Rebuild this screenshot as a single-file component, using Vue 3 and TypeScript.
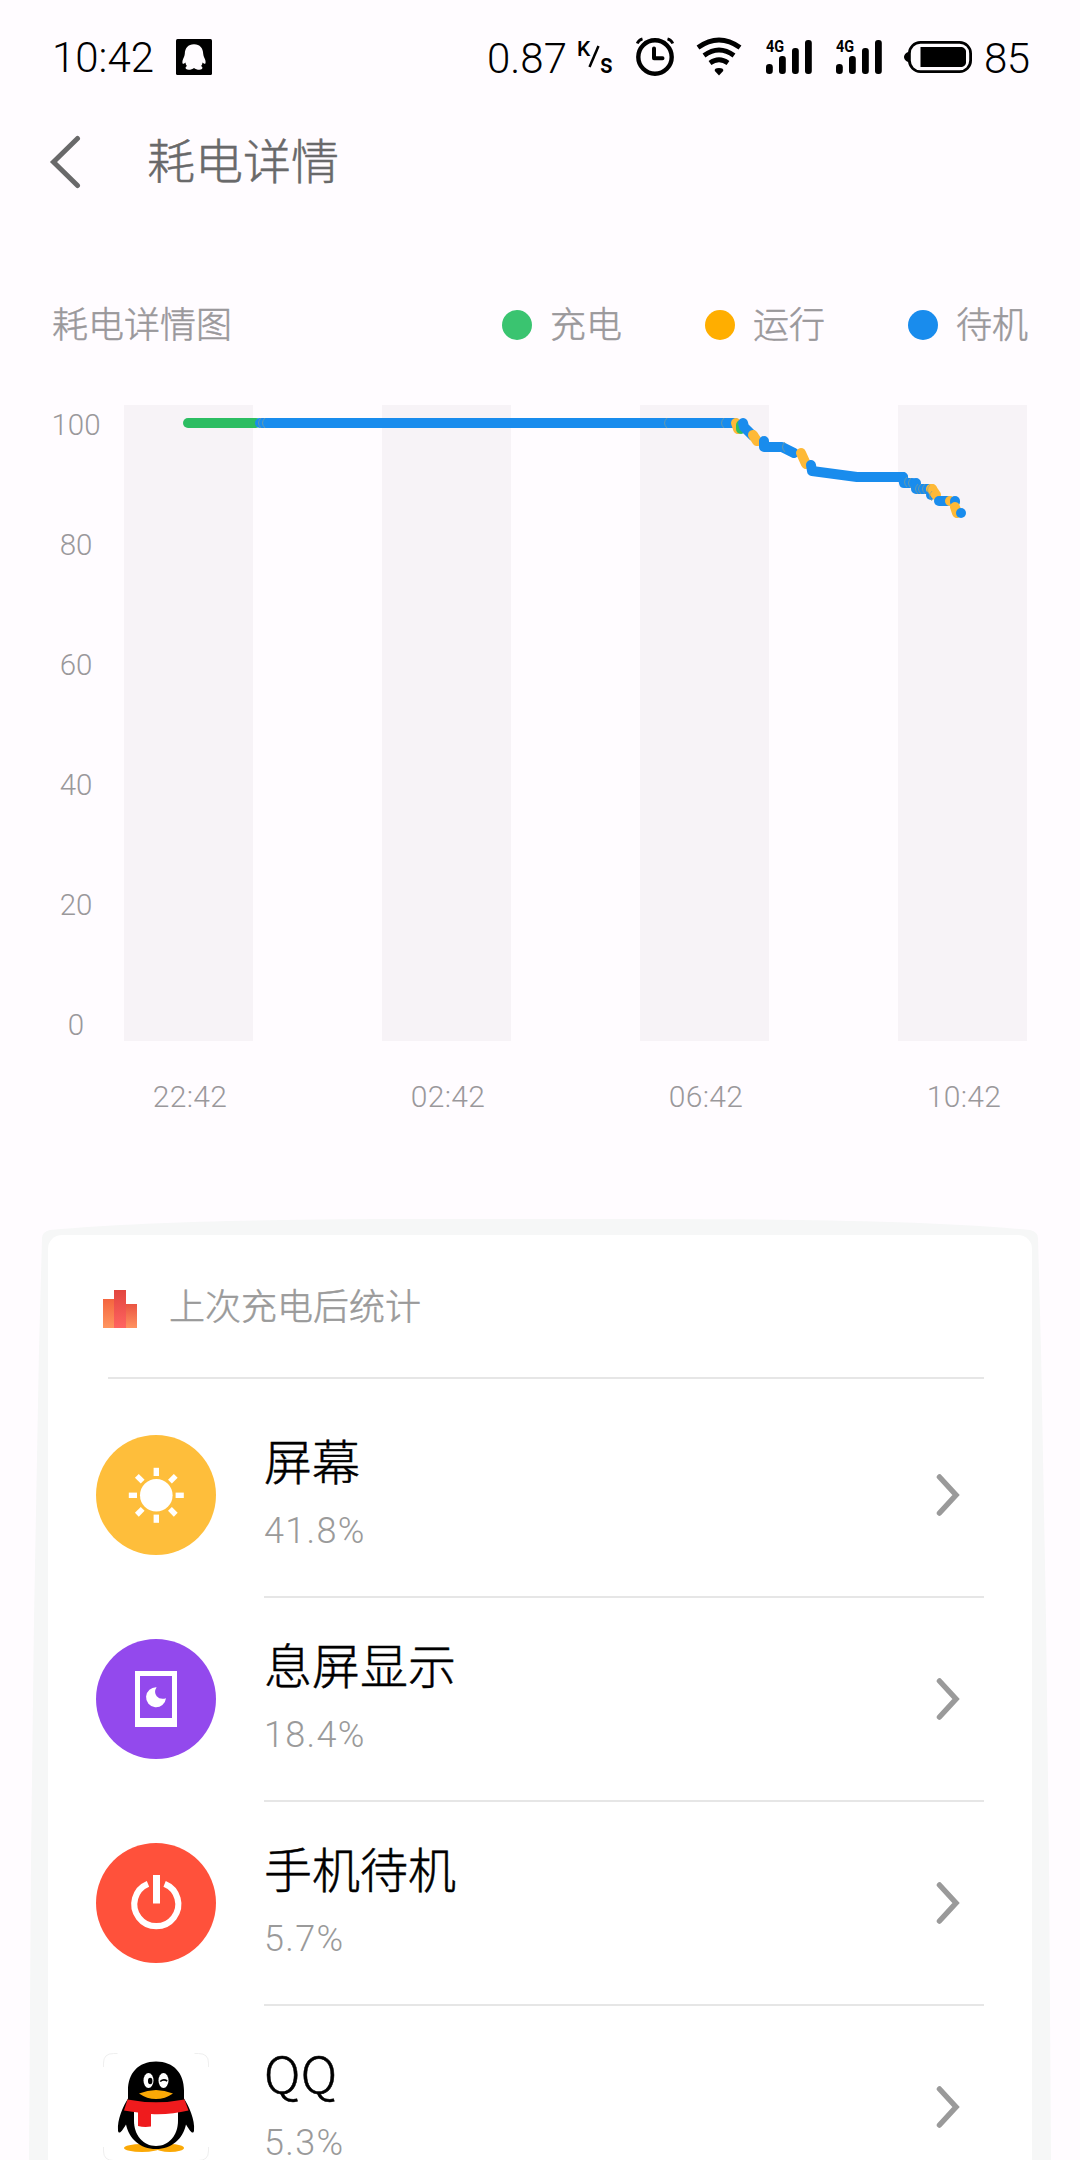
<script setup lang="ts">
interface Legend { label: string; color: string }
interface Segment { color: string; points: string }
interface UsageItem { name: string; percent: string; icon: 'screen' | 'aod' | 'standby' | 'qq' }

const GREEN = '#2cbd62'
const ORANGE = '#feb937'
const BLUE = '#198ced'

const legends: Legend[] = [
  { label: '充电', color: '#3ac470' },
  { label: '运行', color: '#ffae00' },
  { label: '待机', color: '#198ced' },
]
const levels: string[] = ['100', '80', '60', '40', '20', '0']
const times: string[] = ['22:42', '02:42', '06:42', '10:42']
const bands: number[] = [0, 258, 516, 774]

const segments: Segment[] = [
  { color: GREEN, points: '64,18 132,18' },
  { color: BLUE, points: '136,18 611,18' },
  { color: ORANGE, points: '612,18 614,24' },
  { color: GREEN, points: '617,20 617,24' },
  { color: BLUE, points: '619,18 620,22 629,31' },
  { color: ORANGE, points: '629,30 633,36' },
  { color: BLUE, points: '640,36 640,42 658,42 670,48' },
  { color: ORANGE, points: '677,48 682,59' },
  { color: BLUE, points: '687,60 688,66 733,72 779,72' },
  { color: BLUE, points: '779,72 780,78 788,78' },
  { color: BLUE, points: '792,78 792,84 805,84' },
  { color: ORANGE, points: '807,84 808,84' },
  { color: BLUE, points: '807,90 807,90' },
  { color: ORANGE, points: '808,84 812,90' },
  { color: BLUE, points: '815,96 823,96' },
  { color: ORANGE, points: '826,96 826,96' },
  { color: BLUE, points: '831,96 831,97' },
  { color: ORANGE, points: '831,102 833,108' },
  { color: BLUE, points: '837,108 837,108' },
]
const seams: [number, number][] = [[137, 18], [141, 18], [543, 18], [600, 18], [661, 42], [783, 77], [787, 78], [794, 84], [797, 84], [801, 84], [806, 85], [808, 91]]
const rays: number[] = [0, 45, 90, 135, 180, 225, 270, 315]

const items: UsageItem[] = [
  { name: '屏幕', percent: '41.8%', icon: 'screen' },
  { name: '息屏显示', percent: '18.4%', icon: 'aod' },
  { name: '手机待机', percent: '5.7%', icon: 'standby' },
  { name: 'QQ', percent: '5.3%', icon: 'qq' },
]
</script>

<template>
  <main class="page">
    <header class="status">
      <span class="clock">10:42</span>
      <svg class="note" width="36" height="36" viewBox="0 0 36 36">
        <rect width="36" height="36" rx="1.5" />
        <path fill="#fffcff" d="M18 5.2c-6 0-9 4-9.2 9.500-.2 2.300-.9 3.300-1.700 5.300-.9 2.200-.9 4.400-.2 4.700.7.200 1.500-.4 2.500-1.200.200 1.400.7 2.500 1.500 3.500-1.500.7-1.700 2.200-.8 3.100 1.800 1.300 6 .6 7.900-1.200 1.900 1.800 6.100 2.500 7.900 1.200.9-.9.7-2.400-.8-3.100.8-1 1.300-2.100 1.500-3.500 1 .8 1.800 1.400 2.500 1.200.7-.3.700-2.500-.2-4.700-.8-2-1.500-3-1.700-5.300C27 9.200 24 5.200 18 5.200z" />
      </svg>
      <span class="speed">0.87</span>
      <span class="unit"><b class="unit-k">K</b><svg width="12" height="24" viewBox="0 0 12 24"><path d="M10.500 1 1.500 22" stroke="#000" stroke-width="2.500" /></svg><b class="unit-s">s</b></span>
      <svg class="alarm" width="38" height="40" viewBox="0 0 38 40" fill="none" stroke="#000">
        <circle cx="19" cy="20" r="16.700" stroke-width="4.400" />
        <path d="M18 11V20.800H26.500" stroke-width="4" stroke-linecap="round" stroke-linejoin="round" transform="translate(0 .5)" />
        <path d="M1.200 6.500Q2.500 3 6.500 1.800M36.800 6.500Q35.500 3 31.500 1.800" stroke-width="2.800" />
      </svg>
      <svg class="wifi" width="46" height="40" viewBox="0 0 46 40" fill="none" stroke="#000" stroke-width="4.800">
        <path d="M2 10.500Q23-4.500 44 10.500M8 18.500Q23 7.500 38 18.500M14 26Q23 19.500 32 26" />
        <path d="M23 38.500l-4.200-4.500q-.8-3 4.200-3t4.200 3z" fill="#000" stroke="none" />
      </svg>
      <span v-for="n in 2" :key="n" class="signal">
        <b class="net">4G</b>
        <svg width="46" height="36" viewBox="0 0 46 36">
          <rect x="0" y="25" width="6.800" height="10" rx="3.200" />
          <rect x="13" y="17" width="6.800" height="18" rx="3" />
          <rect x="26" y="9" width="6.800" height="26" rx="3" />
          <rect x="39" y="1" width="6.800" height="34" rx="3" />
        </svg>
      </span>
      <svg class="battery" width="68" height="32" viewBox="0 0 68 32">
        <path d="M6 10.500C2.500 11 0 13.500 0 16s2.500 5 6 5.500z" />
        <rect x="5.400" y="1.400" width="61.200" height="29.200" rx="11" fill="none" stroke="#000" stroke-width="2.800" />
        <path d="M16.500 6H58q4 1.500 4 4.500v11q0 3-4 4.500H16.500z" />
      </svg>
      <span class="charge">85</span>
    </header>

    <nav class="titlebar">
      <svg width="32" height="54" viewBox="0 0 32 54" fill="none" stroke="#69696a" stroke-width="5" stroke-linecap="round">
        <path d="M28.500 3.500 4.500 27l24 23.500" />
      </svg>
      <h1>耗电详情</h1>
    </nav>

    <section class="chart">
      <div class="chart-head">
        <h2>耗电详情图</h2>
        <ul>
          <li v-for="l in legends" :key="l.label">
            <i :style="{ background: l.color }"></i><span>{{ l.label }}</span>
          </li>
        </ul>
      </div>
      <div class="chart-body">
        <div class="levels"><span v-for="v in levels" :key="v">{{ v }}</span></div>
        <svg width="904" height="636" viewBox="0 0 904 636">
          <rect v-for="x in bands" :key="x" :x="x" y="0" width="129" height="636" fill="#f7f3f7" />
          <polyline
            v-for="(s, i) in segments" :key="i" :points="s.points" :stroke="s.color"
            fill="none" stroke-width="10" stroke-linecap="round" stroke-linejoin="round"
          />
          <path
            v-for="(s, i) in seams" :key="'s' + i" :d="`M${s[0]} ${s[1] - 5}q-5 5 0 10`"
            fill="none" stroke="#8a9f8c" stroke-width="0.700"
          />
        </svg>
      </div>
      <div class="times"><span v-for="t in times" :key="t">{{ t }}</span></div>
    </section>

    <section class="card">
      <svg class="halo" width="1080" height="941" viewBox="0 0 1080 941">
        <path fill="#f6f7f7" d="M42 19Q42 13 50 11C180-1 380 0 540 0S900-1 1030 11Q1038 13 1038 19L1041 130 1046 400 1049 640 1051 941H29L31 640 34 400 39 130z" />
      </svg>
      <div class="panel">
        <div class="panel-head">
          <svg width="34" height="38" viewBox="0 0 34 38">
            <defs>
              <linearGradient id="side" x1="0" y1="0" x2="0" y2="1"><stop stop-color="#f4653f" /><stop offset="1" stop-color="#ff955f" /></linearGradient>
              <linearGradient id="mid" x1="0" y1="0" x2="0" y2="1"><stop stop-color="#e2463f" /><stop offset="1" stop-color="#ff6461" /></linearGradient>
              <linearGradient id="end" x1="0" y1="0" x2="0" y2="1"><stop stop-color="#ea5443" /><stop offset="1" stop-color="#ff925f" /></linearGradient>
            </defs>
            <rect y="9" width="11" height="29" fill="url(#side)" />
            <rect x="11" width="12" height="38" fill="url(#mid)" />
            <rect x="23" y="14" width="11" height="24" fill="url(#end)" />
          </svg>
          <h2>上次充电后统计</h2>
        </div>
        <article v-for="it in items" :key="it.name" class="row">
          <svg class="icon" width="120" height="120" viewBox="0 0 120 120">
            <g v-if="it.icon === 'screen'">
              <circle cx="60" cy="60" r="60" fill="#febe3b" />
              <circle cx="60.300" cy="60.300" r="16.300" fill="#fff" />
              <rect v-for="a in rays" :key="a" x="57.600" y="32.800" width="5.400" height="8.200" fill="#fff" :transform="`rotate(${a} 60.300 60.300)`" />
            </g>
            <g v-else-if="it.icon === 'aod'">
              <circle cx="60" cy="60" r="60" fill="#9349ed" />
              <path fill="#fff" fill-rule="evenodd" d="M39 32h42v56H39zM44 37v42h32V37z" />
              <path fill="#fff" d="M60.600 48.200A10 10 0 1 0 70 59.300Q64 61 60.700 57.300Q57.500 53 60.600 48.200z" />
            </g>
            <g v-else-if="it.icon === 'standby'">
              <circle cx="60" cy="60" r="60" fill="#ff513b" />
              <path d="M52 40.800A22 22 0 1 0 68.600 40.800" fill="none" stroke="#fff" stroke-width="6.200" />
              <rect x="57" y="32" width="7" height="28.500" fill="#fff" />
            </g>
            <g v-else>
              <path d="M7.500 20v-4q0-9.500 10-9.500h4M98.500 6.500h4q10 0 10 9.500v4M7.500 100v4q0 9.500 10 9.500h4M98.500 113.500h4q10 0 10-9.500v-4" fill="none" stroke="#efefef" />
              <ellipse cx="46" cy="101" rx="18" ry="4" fill="#fba906" />
              <ellipse cx="74" cy="101" rx="14" ry="4" fill="#fba906" />
              <path d="M60 14.500c-18 0-28 12-28 29v8c-5 8-11 21-10 32 .5 4 3 2.500 8-6 3 14 14 24.500 30 24.500s27-10.500 30-24.500c5 8.500 7.500 10 8 6 1-11-5-24-10-32v-8c0-17-10-29-28-29z" />
              <path d="M38 60h44v14c0 14-9 25-22 25S38 88 38 74z" fill="#fff" />
              <path d="M31.500 52.500Q60 58 88.500 52.500L92.500 63.500Q74 68 55 67V79.500Q48 80.500 42 79V65.500Q34 64.500 28 63.500z" fill="#ef1b1d" />
              <path d="M43 46.500Q60 39.500 77 46.500Q69 52 60 52T43 46.500z" fill="#fba906" />
              <ellipse cx="52.500" cy="33.500" rx="5" ry="7.500" fill="#fff" />
              <ellipse cx="67.500" cy="33.500" rx="5" ry="7.500" fill="#fff" />
              <ellipse cx="54.200" cy="34" rx="2.200" ry="3.200" />
              <path d="M64.200 34.500Q67.500 31.500 71.200 34" fill="none" stroke="#000" stroke-width="1.600" />
            </g>
          </svg>
          <div class="info">
            <div class="text"><h3 :class="{ latin: it.icon === 'qq' }">{{ it.name }}</h3><p>{{ it.percent }}</p></div>
            <svg width="26" height="44" viewBox="0 0 26 44" fill="none" stroke="#9a9a9a" stroke-width="5.500" stroke-linecap="round">
              <path d="M4.500 4 21 22 4.500 40" />
            </svg>
          </div>
        </article>
      </div>
    </section>
  </main>
</template>

<style>
body { margin: 0; background: #fffcff; }
</style>

<style scoped>
.page { width: 1080px; height: 2160px; overflow: hidden; background: #fffcff; display: flex; flex-direction: column; font-family: Roboto, "Noto Sans CJK SC", sans-serif; font-weight: 300; color: #000; }
h1, h2, h3, p, ul { margin: 0; padding: 0; font-weight: 300; list-style: none; }
svg { display: block; flex: none; }
h1, h2, h3, li { font-family: "Noto Sans CJK SC Light", "Noto Sans CJK SC", sans-serif; -webkit-text-stroke: 0.500px currentColor; }

.status { height: 115px; flex: none; box-sizing: border-box; padding: 0 0 1px 52px; display: flex; align-items: center; font-size: 42px; white-space: nowrap; }
.clock { width: 124px; line-height: 48px; padding-top: 2px; }
.speed { margin-left: 275px; width: 90px; padding-top: 3px; }
.unit { display: flex; width: 35px; height: 34px; align-items: flex-start; font-size: 21px; line-height: 20px; }
.unit b { font-weight: 500; }
.unit-k { width: 12px; margin-top: -1px; }
.unit svg { margin: 5px 0 0 -1px; }
.unit-s { padding-top: 14px; font-size: 27px; transform: scaleX(0.920); transform-origin: left; }
.alarm { margin-left: 24px; }
.wifi { margin-left: 22px; }
.signal { position: relative; margin-left: 24px; }
.signal + .signal { margin-left: 24px; }
.net { position: absolute; left: 0; top: -1px; font-size: 17px; line-height: 16px; font-weight: 700; transform: scaleX(0.850); transform-origin: left; }
.battery { margin-left: 22px; }
.charge { margin-left: 12px; padding-top: 3px; letter-spacing: -0.500px; }

.titlebar { height: 95px; flex: none; display: flex; align-items: center; padding-left: 49px; }
.titlebar svg { margin-top: -2px; }
.titlebar h1 { margin: -10px 0 0 66px; font-size: 48px; line-height: 60px; color: #69696a; }

.chart { height: 1009px; flex: none; padding-top: 90px; box-sizing: border-box; color: #9a989b; }
.chart-head { height: 50px; display: flex; justify-content: space-between; align-items: center; padding: 0 52px; }
.chart-head h2, .panel-head h2, .chart-head li { font-size: 36px; line-height: 50px; }
.chart-head h2, .chart-head span { margin-top: -6px; }
.chart-head ul { display: flex; gap: 83px; }
.chart-head li { display: flex; align-items: center; }
.chart-head i { width: 30px; height: 30px; border-radius: 50%; margin-right: 18px; }
.chart-body { display: flex; margin-top: 55px; font-size: 29.500px; }
.levels { width: 124px; height: 636px; box-sizing: border-box; padding: 5px 0 0 28px; display: flex; flex-direction: column; }
.levels span { flex: none; height: 120px; line-height: 31px; width: 96px; text-align: center; }
.times { display: flex; margin: 40px 0 0 61px; font-size: 30px; line-height: 32px; letter-spacing: 0.300px; }
.times span { width: 258px; flex: none; text-align: center; }

.card { position: relative; flex: 1; padding: 16px 48px 0; }
.halo { position: absolute; left: 0; top: 0; }
.panel { position: relative; height: 940px; background: #fff; border-radius: 14px 14px 0 0; }
.panel-head { height: 144px; box-sizing: border-box; margin: 0 48px 0 60px; border-bottom: 2px solid #e6e6e6; display: flex; align-items: center; color: #9a9a9a; }
.panel-head svg { margin: 6px 0 0 -5px; }
.panel-head h2 { margin: -4px 0 0 32px; }
.row { height: 204px; padding: 0 48px; display: flex; }
.row:nth-child(2) { padding-top: 15px; }
.icon { margin-top: 41px; }
.info { flex: 1; box-sizing: border-box; height: 204px; margin-left: 48px; padding-right: 23px; border-bottom: 2px solid #e6e6e6; display: flex; justify-content: space-between; align-items: center; }
.text h3 { margin-top: -17px; font-size: 48px; line-height: 60px; }
.text h3.latin { font-size: 50px; letter-spacing: 0.500px; }
.text p { margin-top: 28px; font-size: 36px; line-height: 28px; letter-spacing: 1.300px; color: #9a9a9a; }
</style>
